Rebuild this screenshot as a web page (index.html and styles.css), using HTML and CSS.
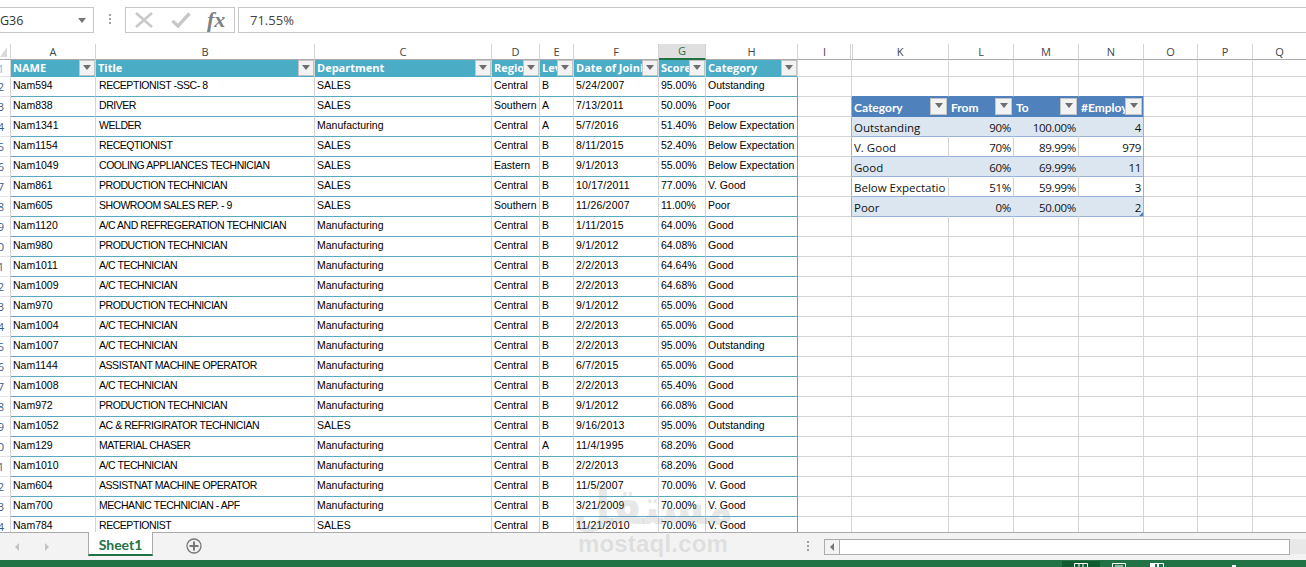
FILE: index.html
```html
<!DOCTYPE html>
<html lang="en">
<head>
<meta charset="utf-8">
<title>Sheet1 - Excel</title>
<link rel="stylesheet" href="styles.css">
</head>
<body>
<div class="app">
  <div class="formula-bar">
    <div class="name-box"><span>G36</span><i class="caret"></i></div>
    <div class="grip"><b></b><b></b><b></b></div>
    <div class="fx-box">
      <svg class="ic-x" width="18" height="16" viewBox="0 0 18 16"><path d="M1 1 17 15M17 1 1 15" fill="none" stroke="#c8c8c8" stroke-width="2.4"/></svg>
      <svg class="ic-c" width="20" height="16" viewBox="0 0 20 16"><path d="M1.500 9 7 14 18.500 1.500" fill="none" stroke="#c8c8c8" stroke-width="3.400"/></svg>
      <span class="fx">fx</span>
    </div>
    <div class="formula-input">71.55%</div>
  </div>
  <div class="sheet">
    <table class="grid">
      <colgroup><col class="c0"><col class="ca"><col class="cb"><col class="cc"><col class="cd"><col class="ce"><col class="cf"><col class="cg"><col class="ch"><col class="ci"><col class="ck"><col class="cl"><col class="cl"><col class="cl"><col class="co"><col class="cp"><col class="co"></colgroup>
      <thead>
        <tr><th class="corner"></th><th>A</th><th>B</th><th>C</th><th>D</th><th>E</th><th>F</th><th class="sel">G</th><th>H</th><th class="hid">I</th><th class="after-hid">K</th><th>L</th><th>M</th><th>N</th><th>O</th><th>P</th><th>Q</th></tr>
      </thead>
      <tbody>
        <tr class="head"><th class="rn">1</th><td class="h">NAME<i class="fb"></i></td><td class="h">Title<i class="fb"></i></td><td class="h">Department<i class="fb"></i></td><td class="h">Regio<i class="fb"></i></td><td class="h">Lev<i class="fb"></i></td><td class="h">Date of Joinin<i class="fb"></i></td><td class="h">Score<i class="fb"></i></td><td class="h">Category<i class="fb"></i></td><td></td><td></td><td></td><td></td><td></td><td></td><td></td><td></td></tr>
        <tr><th class="rn">2</th><td>Nam594</td><td>RECEPTIONIST -SSC- 8</td><td>SALES</td><td>Central</td><td>B</td><td>5/24/2007</td><td>95.00%</td><td>Outstanding</td><td class="edge-top"></td><td class="above"></td><td class="above"></td><td class="above"></td><td class="above"></td><td></td><td></td><td></td></tr>
        <tr><th class="rn">3</th><td>Nam838</td><td>DRIVER</td><td>SALES</td><td>Southern</td><td>A</td><td>7/13/2011</td><td>50.00%</td><td>Poor</td><td class="edge"></td><td class="th2">Category<i class="fb2"></i></td><td class="th2">From<i class="fb2"></i></td><td class="th2">To<i class="fb2"></i></td><td class="th2 last">#Employe<i class="fb2"></i></td><td></td><td></td><td></td></tr>
        <tr><th class="rn">4</th><td>Nam1341</td><td>WELDER</td><td>Manufacturing</td><td>Central</td><td>A</td><td>5/7/2016</td><td>51.40%</td><td>Below Expectation</td><td class="edge"></td><td class="band">Outstanding</td><td class="band num">90%</td><td class="band num">100.00%</td><td class="band num last">4</td><td></td><td></td><td></td></tr>
        <tr><th class="rn">5</th><td>Nam1154</td><td>RECEQTIONIST</td><td>SALES</td><td>Central</td><td>B</td><td>8/11/2015</td><td>52.40%</td><td>Below Expectation</td><td class="edge"></td><td class="plain">V. Good</td><td class="plain num">70%</td><td class="plain num">89.99%</td><td class="plain num last">979</td><td></td><td></td><td></td></tr>
        <tr><th class="rn">6</th><td>Nam1049</td><td>COOLING APPLIANCES TECHNICIAN</td><td>SALES</td><td>Eastern</td><td>B</td><td>9/1/2013</td><td>55.00%</td><td>Below Expectation</td><td class="edge"></td><td class="band">Good</td><td class="band num">60%</td><td class="band num">69.99%</td><td class="band num last">11</td><td></td><td></td><td></td></tr>
        <tr><th class="rn">7</th><td>Nam861</td><td>PRODUCTION TECHNICIAN</td><td>SALES</td><td>Central</td><td>B</td><td>10/17/2011</td><td>77.00%</td><td>V. Good</td><td class="edge"></td><td class="plain">Below Expectatio</td><td class="plain num">51%</td><td class="plain num">59.99%</td><td class="plain num last">3</td><td></td><td></td><td></td></tr>
        <tr><th class="rn">8</th><td>Nam605</td><td>SHOWROOM SALES REP. - 9</td><td>SALES</td><td>Southern</td><td>B</td><td>11/26/2007</td><td>11.00%</td><td>Poor</td><td class="edge"></td><td class="band">Poor</td><td class="band num">0%</td><td class="band num">50.00%</td><td class="band num last">2<i class="handle"></i></td><td></td><td></td><td></td></tr>
        <tr><th class="rn">9</th><td>Nam1120</td><td>A/C AND REFREGERATION TECHNICIAN</td><td>Manufacturing</td><td>Central</td><td>B</td><td>1/11/2015</td><td>64.00%</td><td>Good</td><td></td><td></td><td></td><td></td><td></td><td></td><td></td><td></td></tr>
        <tr><th class="rn">10</th><td>Nam980</td><td>PRODUCTION TECHNICIAN</td><td>Manufacturing</td><td>Central</td><td>B</td><td>9/1/2012</td><td>64.08%</td><td>Good</td><td></td><td></td><td></td><td></td><td></td><td></td><td></td><td></td></tr>
        <tr><th class="rn">11</th><td>Nam1011</td><td>A/C TECHNICIAN</td><td>Manufacturing</td><td>Central</td><td>B</td><td>2/2/2013</td><td>64.64%</td><td>Good</td><td></td><td></td><td></td><td></td><td></td><td></td><td></td><td></td></tr>
        <tr><th class="rn">12</th><td>Nam1009</td><td>A/C TECHNICIAN</td><td>Manufacturing</td><td>Central</td><td>B</td><td>2/2/2013</td><td>64.68%</td><td>Good</td><td></td><td></td><td></td><td></td><td></td><td></td><td></td><td></td></tr>
        <tr><th class="rn">13</th><td>Nam970</td><td>PRODUCTION TECHNICIAN</td><td>Manufacturing</td><td>Central</td><td>B</td><td>9/1/2012</td><td>65.00%</td><td>Good</td><td></td><td></td><td></td><td></td><td></td><td></td><td></td><td></td></tr>
        <tr><th class="rn">14</th><td>Nam1004</td><td>A/C TECHNICIAN</td><td>Manufacturing</td><td>Central</td><td>B</td><td>2/2/2013</td><td>65.00%</td><td>Good</td><td></td><td></td><td></td><td></td><td></td><td></td><td></td><td></td></tr>
        <tr><th class="rn">15</th><td>Nam1007</td><td>A/C TECHNICIAN</td><td>Manufacturing</td><td>Central</td><td>B</td><td>2/2/2013</td><td>95.00%</td><td>Outstanding</td><td></td><td></td><td></td><td></td><td></td><td></td><td></td><td></td></tr>
        <tr><th class="rn">16</th><td>Nam1144</td><td>ASSISTANT MACHINE OPERATOR</td><td>Manufacturing</td><td>Central</td><td>B</td><td>6/7/2015</td><td>65.00%</td><td>Good</td><td></td><td></td><td></td><td></td><td></td><td></td><td></td><td></td></tr>
        <tr><th class="rn">17</th><td>Nam1008</td><td>A/C TECHNICIAN</td><td>Manufacturing</td><td>Central</td><td>B</td><td>2/2/2013</td><td>65.40%</td><td>Good</td><td></td><td></td><td></td><td></td><td></td><td></td><td></td><td></td></tr>
        <tr><th class="rn">18</th><td>Nam972</td><td>PRODUCTION TECHNICIAN</td><td>Manufacturing</td><td>Central</td><td>B</td><td>9/1/2012</td><td>66.08%</td><td>Good</td><td></td><td></td><td></td><td></td><td></td><td></td><td></td><td></td></tr>
        <tr><th class="rn">19</th><td>Nam1052</td><td>AC &amp; REFRIGIRATOR TECHNICIAN</td><td>SALES</td><td>Central</td><td>B</td><td>9/16/2013</td><td>95.00%</td><td>Outstanding</td><td></td><td></td><td></td><td></td><td></td><td></td><td></td><td></td></tr>
        <tr><th class="rn">20</th><td>Nam129</td><td>MATERIAL CHASER</td><td>Manufacturing</td><td>Central</td><td>A</td><td>11/4/1995</td><td>68.20%</td><td>Good</td><td></td><td></td><td></td><td></td><td></td><td></td><td></td><td></td></tr>
        <tr><th class="rn">21</th><td>Nam1010</td><td>A/C TECHNICIAN</td><td>Manufacturing</td><td>Central</td><td>B</td><td>2/2/2013</td><td>68.20%</td><td>Good</td><td></td><td></td><td></td><td></td><td></td><td></td><td></td><td></td></tr>
        <tr><th class="rn">22</th><td>Nam604</td><td>ASSISTNAT MACHINE OPERATOR</td><td>Manufacturing</td><td>Central</td><td>B</td><td>11/5/2007</td><td>70.00%</td><td>V. Good</td><td></td><td></td><td></td><td></td><td></td><td></td><td></td><td></td></tr>
        <tr><th class="rn">23</th><td>Nam700</td><td>MECHANIC TECHNICIAN - APF</td><td>Manufacturing</td><td>Central</td><td>B</td><td>3/21/2009</td><td>70.00%</td><td>V. Good</td><td></td><td></td><td></td><td></td><td></td><td></td><td></td><td></td></tr>
        <tr><th class="rn">24</th><td>Nam784</td><td>RECEPTIONIST</td><td>SALES</td><td>Central</td><td>B</td><td>11/21/2010</td><td>70.00%</td><td>V. Good</td><td></td><td></td><td></td><td></td><td></td><td></td><td></td><td></td></tr>
      </tbody>
    </table>
  </div>
  <div class="tabs">
    <div class="nav"><i class="tri-l"></i><i class="tri-r"></i></div>
    <div class="tab">Sheet1</div>
    <svg class="plus" width="16" height="16" viewBox="0 0 16 16"><circle cx="8" cy="8" r="7" fill="none" stroke="#777" stroke-width="1.300"/><path d="M8 3.500v9M3.500 8h9" stroke="#777" stroke-width="2"/></svg>
    <div class="grip tab-grip"><b></b><b></b><b></b></div>
    <div class="hscroll"><div class="sb-btn"><i class="tri-l dark"></i></div></div>
    <div class="dither"></div>
  </div>
  <div class="status">
    <div class="view active"><svg width="14" height="6" viewBox="0 0 14 6"><path d="M.5 6V.5h13V6M5 0v6M9 0v6" fill="none" stroke="#fff"/></svg></div>
    <div class="view"><svg width="14" height="6" viewBox="0 0 14 6"><path d="M.5 6V.5h13V6M3 3h8" fill="none" stroke="#fff"/></svg></div>
    <div class="view"><svg width="14" height="6" viewBox="0 0 14 6"><path d="M.5 6V.5h13V6" fill="none" stroke="#fff"/><path d="M0 0h5v6H0zM7 0h2v6H7z" fill="#fff"/></svg></div>
    <i class="zoom-tick"></i>
  </div>
  <div class="watermark" aria-hidden="true"><span class="wm-ar">مستقل</span><span class="wm-en">mostaql.com</span></div>
</div>
</body>
</html>
```
FILE: styles.css
```css
* { box-sizing: border-box; }
html, body { margin: 0; height: 100%; overflow: hidden; }
body { background: #fff; font-family: "Liberation Sans", Arial, sans-serif; color: #000; }
.app { position: relative; width: 1306px; height: 567px; display: flex; flex-direction: column; overflow: hidden; }

.formula-bar { height: 44px; flex: none; display: flex; align-items: flex-start; padding-top: 7px; background: #fff; }
.name-box { width: 95px; height: 26px; margin-left: -1px; border: 1px solid #c6c6c6; display: flex; align-items: center; justify-content: space-between; padding: 0 7px 0 0; font: 12.5px "Open Sans", sans-serif; color: #333; }
.caret { width: 0; height: 0; border: 4px solid transparent; border-top: 5px solid #777; border-bottom: 0; }
.grip { display: flex; flex-direction: column; gap: 2px; }
.grip b { display: block; width: 2px; height: 2px; background: #a0a0a0; }
.formula-bar .grip { margin: 7px 14px 0 15px; }
.fx-box { width: 110px; height: 26px; border: 1px solid #c6c6c6; display: flex; align-items: center; padding-left: 9px; }
.ic-c { margin-left: 18px; }
.fx { margin-left: 16px; font: italic 700 22px/24px "Liberation Serif", serif; color: #808080; }
.formula-input { flex: 1; height: 26px; margin-left: 3px; margin-right: -1px; border: 1px solid #c6c6c6; padding-left: 11px; font: 13px/24px "Open Sans", sans-serif; color: #444; }

.sheet { flex: 1; min-height: 0; overflow: hidden; background: #fff; }
.grid { width: 1306px; table-layout: fixed; border-collapse: separate; border-spacing: 0; font-size: 10.5px; }
.c0 { width: 11px; } .ca { width: 85px; } .cb { width: 219px; } .cc { width: 177px; } .cd { width: 48px; } .ce { width: 34px; } .cf { width: 85px; } .cg { width: 47px; } .ch { width: 92px; } .ci { width: 54px; } .ck { width: 97px; } .cl { width: 65px; } .co { width: 54px; } .cp { width: 55px; }

.grid thead th { height: 15px; padding: 0; border-right: 1px solid #d4d4d4; border-bottom: 1px solid #ababab; font: 400 11px/14px "Open Sans", sans-serif; color: #444; background: #fff; text-align: center; }
.grid thead .corner { position: relative; border-right-color: #d4d4d4; }
.corner::after { content: ""; position: absolute; left: 0; bottom: 2px; border-style: solid; border-width: 0 0 10px 7px; border-color: transparent transparent #dadada transparent; }
.grid thead .sel { background: #dfdfdf; border-bottom: 2px solid #217346; color: #217346; }
.grid thead .hid { border-right-color: #fff; box-shadow: inset -1px 0 0 #d4d4d4; }
.grid thead .after-hid { box-shadow: inset 1px 0 0 #d4d4d4; }

.grid tbody tr { height: 20px; }
.grid tbody tr.head { height: 17px; }
.rn { padding: 0 7px 0 0; overflow: hidden; text-align: right; direction: rtl; font: 400 11px/13px "Open Sans", sans-serif; color: #3d5a80; border-right: 1px solid #d4d4d4; border-bottom: 1px solid #e4e4e4; white-space: nowrap; background: #fff; }
.head .rn { color: #58c4dc; }
.grid tbody td { position: relative; padding: 0 2px 2px; overflow: hidden; white-space: nowrap; vertical-align: middle; border-right: 1px solid #d4d4d4; border-bottom: 1px solid #d4d4d4; line-height: 13px; }
.grid tbody td:nth-of-type(-n+8) { border-bottom-color: #5aa9c2; }
.grid tbody td:nth-of-type(8) { border-right-color: #5aa9c2; }
.grid tbody td:nth-of-type(2) { padding-left: 3px; letter-spacing: -0.45px; }
.grid tbody td:nth-of-type(6) { letter-spacing: 0.2px; }

.grid tbody td.h { background: #4bacc6; color: #fff; border-bottom: 0; font: 700 11px/13px "Open Sans", sans-serif; letter-spacing: 0; padding: 0 2px 2px; }
.grid tbody td.h:nth-of-type(8) { border-right-color: #d4d4d4; }
.fb { position: absolute; right: 0; top: 0; width: 16px; height: 16px; background: #f2f2f2; border: 1px solid #c4c4c4; }
.fb::after, .fb2::after { content: ""; position: absolute; left: 3px; top: 4px; border: 4px solid transparent; border-top: 5px solid #6e6e6e; border-bottom: 0; }

.grid tbody td.edge { border-right-color: #95b3d7; }
.grid tbody td.edge-top { border-right-color: #d4d4d4; }
.grid tbody td.above { border-bottom-color: #4f81bd; }
.grid tbody td.th2, .grid tbody td.band, .grid tbody td.plain { font: 11.5px/14px "Open Sans", sans-serif; vertical-align: bottom; padding-bottom: 1px; color: #111; }
.grid tbody td.th2 { background: #4f81bd; color: #fff; font: 700 12px/14px Lato, sans-serif; border-right-color: #4f81bd; border-bottom-color: #4f81bd; }
.fb2 { position: absolute; right: 1px; top: 1px; width: 17px; height: 17px; background: #f2f2f2; border: 1px solid #c4c4c4; }
.fb2::after { left: 4px; top: 4px; }
.grid tbody td.band { background: #dce6f1; border-right-color: #dce6f1; border-bottom-color: #95b3d7; }
.grid tbody td.plain { border-bottom-color: #95b3d7; }
.grid tbody td.num { text-align: right; padding-right: 2px; letter-spacing: -0.3px; }
.grid tbody td.last { border-right-color: #95b3d7; }
.handle { position: absolute; right: 0; bottom: 0; width: 4px; height: 4px; background: #4f81bd; clip-path: polygon(100% 0, 100% 100%, 0 100%); }

.tabs { height: 28px; flex: none; display: flex; align-items: flex-start; background: #f3f3f3; border-top: 1px solid #ababab; position: relative; }
.nav { width: 88px; display: flex; gap: 26px; padding: 10px 0 0 15px; }
.tri-l { width: 0; height: 0; border: 4px solid transparent; border-right: 4px solid #c4c4c4; border-left: 0; }
.tri-r { width: 0; height: 0; border: 4px solid transparent; border-left: 4px solid #c4c4c4; border-right: 0; }
.tri-l.dark { border-right-color: #777; }
.tab { width: 65px; height: 24px; margin-top: -1px; background: #fff; border: 1px solid #ababab; border-top: 0; border-bottom: 2px solid #217346; font: 700 14px/26px Lato, sans-serif; color: #217346; text-align: center; }
.plus { margin: 5px 0 0 33px; }
.tab-grip { margin: 8px 0 0 605px; }
.hscroll { margin: 6px 0 0 15px; width: 466px; height: 16px; background: #fff; border: 1px solid #ababab; }
.sb-btn { width: 15px; height: 100%; background: #f3f3f3; border-right: 1px solid #ababab; display: flex; align-items: center; justify-content: center; }
.dither { flex: 1; align-self: stretch; margin-top: 6px; margin-bottom: 6px; background: #e8e8e8; }

.status { height: 7px; flex: none; background: #217346; position: relative; display: flex; padding-left: 1062px; }
.view { width: 38px; height: 7px; padding-top: 3px; display: flex; justify-content: center; }
.view.active { background: #0e5c2f; margin-top: 1px; padding-top: 2px; height: 6px; }
.zoom-tick { position: absolute; left: 1232px; top: 5px; width: 4px; height: 2px; background: #fff; }

.watermark { position: absolute; left: 558px; top: 480px; width: 190px; display: flex; flex-direction: column; align-items: center; pointer-events: none; color: rgba(150, 150, 150, 0.22); }
.wm-ar { font: 700 44px/54px "DejaVu Sans", sans-serif; transform: scaleY(1.15); }
.wm-en { font: 700 24px/20px "Liberation Sans", sans-serif; letter-spacing: 0.2px; }
```
